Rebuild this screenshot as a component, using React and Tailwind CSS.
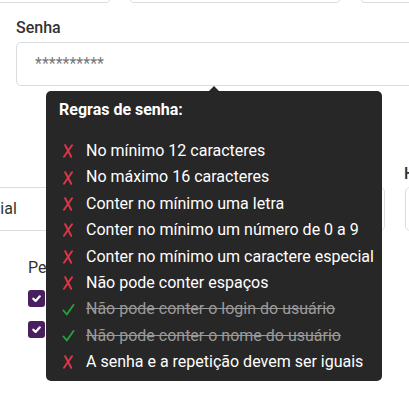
const rules = [
    { text: 'No mínimo 12 caracteres', ok: false },
    { text: 'No máximo 16 caracteres', ok: false },
    { text: 'Conter no mínimo uma letra', ok: false },
    { text: 'Conter no mínimo um número de 0 a 9', ok: false },
    { text: 'Conter no mínimo um caractere especial', ok: false },
    { text: 'Não pode conter espaços', ok: false },
    { text: 'Não pode conter o login do usuário', ok: true },
    { text: 'Não pode conter o nome do usuário', ok: true },
    { text: 'A senha e a repetição devem ser iguais', ok: false },
];

const Check = ({ checked }) => (
    <div className="w-[17px] h-[17px] rounded-[3px] bg-[#4a1f5f] flex items-center justify-center">
        {checked && (
            <svg width="11" height="11" viewBox="0 0 12 12">
                <path d="M2.5 6.2 L5 8.6 L9.6 3.6" stroke="white" strokeWidth="2.4" fill="none" strokeLinecap="round" strokeLinejoin="round" />
            </svg>
        )}
    </div>
);

const RuleIcon = ({ ok }) =>
    ok ? (
        <svg width="13" height="12" viewBox="0 0 13 12">
            <path d="M1.5 6.5 L4.8 10.5 L11.5 1" stroke="#22a33a" strokeWidth="1.9" fill="none" strokeLinecap="round" strokeLinejoin="round" />
        </svg>
    ) : (
        <svg width="12" height="14" viewBox="0 0 12 14">
            <path d="M3.2 1.2 L9.2 12.8 M10 1.2 L2 12.8" stroke="#dc3545" strokeWidth="2" fill="none" strokeLinecap="round" />
        </svg>
    );

const App = () => {
    return (
        <div className="relative w-[409px] h-[401px] overflow-hidden bg-white text-[#333] font-['Roboto',sans-serif]">
            {/* linha de cima (cortada) */}
            <div className="flex -mt-[37px]">
                <div className="w-[121px] h-[40px] border border-[#dcdcdc] rounded-[5px] -ml-[10px] shrink-0" />
                <div className="w-[212px] h-[40px] border border-[#dcdcdc] rounded-[5px] ml-[18px] shrink-0" />
                <div className="w-[200px] h-[40px] border border-[#dcdcdc] rounded-[5px] ml-[19px] shrink-0" />
            </div>

            {/* Senha */}
            <div className="pl-[16px] mt-[13px]">
                <div className="text-[16px] font-medium leading-[24px] text-[#333]">Senha</div>
                <div className="mt-[2px] w-[420px] h-[44px] border border-[#dcdcdc] rounded-[5px] flex items-center pl-[18px] text-[16px] text-[#777]">
                    **********
                </div>
            </div>

            {/* segunda linha */}
            <div className="flex mt-[76px]">
                <div className="w-[427px] -ml-[42px] shrink-0">
                    <div className="h-[24px]" />
                    <div className="mt-[1px] h-[44px] border border-[#dcdcdc] rounded-[5px] flex items-center pl-[9px] text-[16px] text-[#333]">
                        Parcial
                    </div>
                </div>
                <div className="w-[200px] ml-[20px] shrink-0">
                    <div className="h-[24px] text-[16px] font-medium leading-[24px] -ml-[1px]">Hora</div>
                    <div className="mt-[1px] h-[44px] border border-[#dcdcdc] rounded-[5px]" />
                </div>
            </div>

            {/* terceira linha */}
            <div className="pl-[28px] mt-[25px]">
                <div className="text-[16px] leading-[24px]">Permissões</div>
                <div className="mt-[10px] flex flex-col gap-[14px]">
                    <div className="flex items-center gap-2 h-[17px]"><Check checked /><span>Ativo</span></div>
                    <div className="flex items-center gap-2 h-[17px]"><Check checked /><span>Alterar</span></div>
                </div>
            </div>

            {/* tooltip */}
            <div className="absolute left-[46px] top-[91px] w-[336px] h-[290px] bg-[#272727] rounded-[5px] pt-[7px] pl-[13px] text-white">
                <div className="absolute -top-[5px] left-[162px] w-0 h-0 border-l-[6px] border-r-[6px] border-b-[6px] border-l-transparent border-r-transparent border-b-[#272727]" />
                <div className="text-[16px] font-bold leading-[24px]">Regras de senha:</div>
                <ul className="mt-[16px]">
                    {rules.map((r) => (
                        <li key={r.text} className="flex items-center text-[16px] leading-[26.4px]">
                            <span className="w-[27px] pl-[3px] flex items-center">
                                <RuleIcon ok={r.ok} />
                            </span>
                            <span className={r.ok ? 'line-through text-[#9a9a9a]' : ''}>{r.text}</span>
                        </li>
                    ))}
                </ul>
            </div>
        </div>
    );
};

export default App;
